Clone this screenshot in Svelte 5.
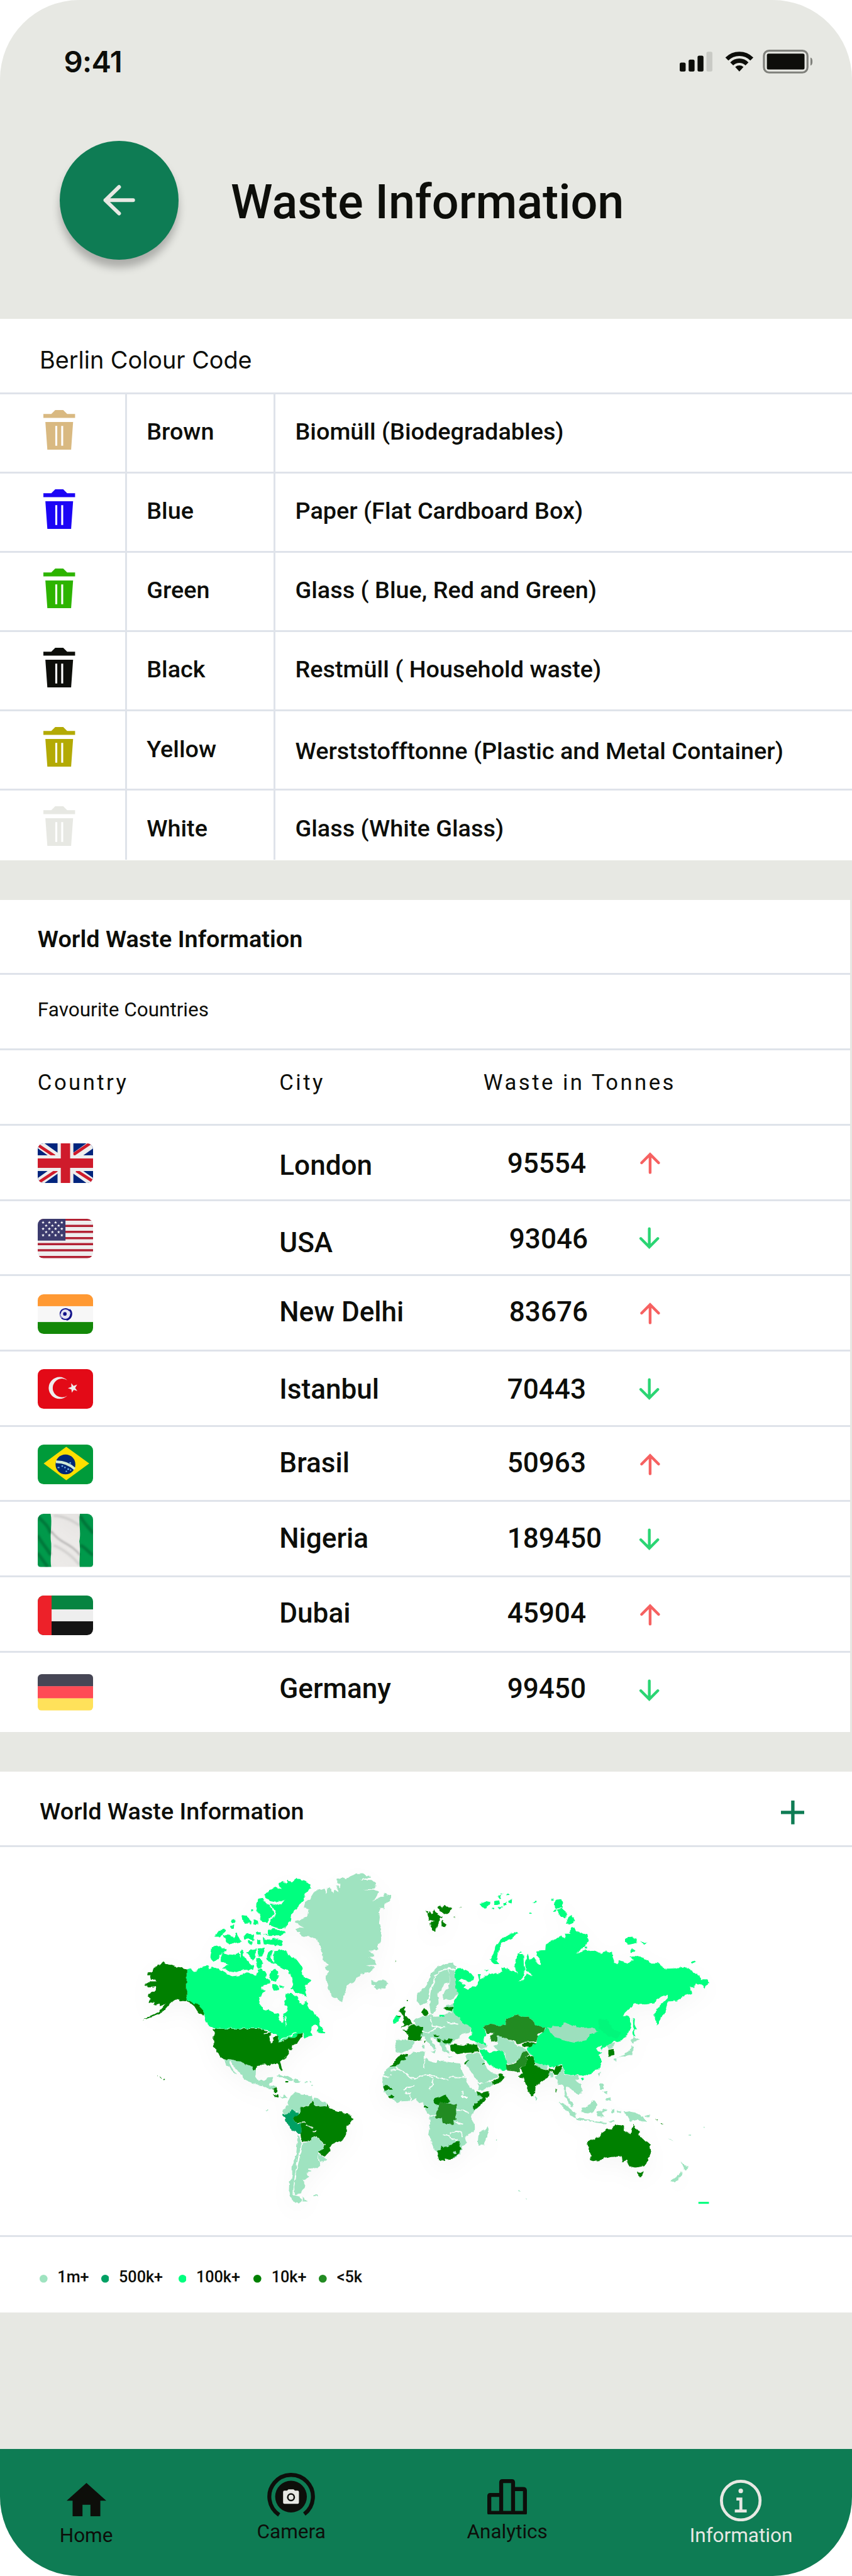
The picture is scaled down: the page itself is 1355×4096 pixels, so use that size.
<script>
  const bins = [
    { name: 'Brown', use: 'Biomüll (Biodegradables)', color: '#d9b981' },
    { name: 'Blue', use: 'Paper (Flat Cardboard Box)', color: '#1c05f5' },
    { name: 'Green', use: 'Glass ( Blue, Red and Green)', color: '#2db400' },
    { name: 'Black', use: 'Restmüll ( Household waste)', color: '#0d0e0a' },
    { name: 'Yellow', use: 'Werststofftonne (Plastic and Metal Container)', color: '#b3aa05', low: true },
    { name: 'White', use: 'Glass (White Glass)', color: '#e7e8e3' }
  ];

  const countries = [
    { flag: 'uk', city: 'London', tonnes: '95554', up: true, cityDrop: 'drop2', numDrop: 'drop1' },
    { flag: 'us', city: 'USA', tonnes: '93046', up: false, cityDrop: 'drop3', numDrop: 'drop1', inset: true },
    { flag: 'in', city: 'New Delhi', tonnes: '83676', up: true, cityDrop: '', numDrop: '', inset: true },
    { flag: 'tr', city: 'Istanbul', tonnes: '70443', up: false, cityDrop: 'drop1', numDrop: 'drop1' },
    { flag: 'br', city: 'Brasil', tonnes: '50963', up: true, cityDrop: '', numDrop: '' },
    { flag: 'ng', city: 'Nigeria', tonnes: '189450', up: false, cityDrop: '', numDrop: '' },
    { flag: 'ae', city: 'Dubai', tonnes: '45904', up: true, cityDrop: '', numDrop: '' },
    { flag: 'de', city: 'Germany', tonnes: '99450', up: false, cityDrop: '', numDrop: '' }
  ];

  const legend = [
    { label: '1m+', color: '#9fe3c0' },
    { label: '500k+', color: '#00a064' },
    { label: '100k+', color: '#00ff7f' },
    { label: '10k+', color: '#008000' },
    { label: '<5k', color: '#228b22' }
  ];

  // Canton stars of the US flag, in flag units
  const stars = [];
  for (let r = 0; r < 5; r++) {
    const odd = r % 2 === 1;
    for (let c = 0; c < (odd ? 3 : 4); c++) {
      stars.push([2.7 + c * 3.15 + (odd ? 1.55 : 0), 1.8 + r * 1.62]);
    }
  }

  // Land shapes of the western half of the map
  const west = {
    light: [
      'M995,168L1018,158 1050,150 1062,178 1062,150 1080,150 1092,172 1100,158 1125,172 1108,140 1118,138 1128,150 1128,135 1115,128 1115,110 1150,105 1165,112 1180,98 1200,88 1240,86 1275,97 1285,105 1230,114 1290,115 1313,130 1310,148 1250,160 1300,156 1325,165 1318,182 1300,208 1315,200 1330,188 1350,190 1350,172 1395,183 1380,205 1355,220 1355,235 1328,235 1332,280 1328,300 1340,330 1335,375 1320,400 1325,415 1275,418 1308,440 1270,450 1310,455 1315,478 1260,480 1308,488 1275,512 1232,518 1200,550 1162,568 1155,600 1140,635 1115,625 1095,620 1070,580 1057,545 1060,520 1075,505 1045,490 1072,478 1045,460 1040,435 1030,400 1010,368 975,355 940,358 915,340 905,322 925,318 950,320 902,300 905,290 930,285 962,270 968,240 945,235 950,210 975,195Z',
      'M1287,545L1310,553 1330,545 1360,543 1376,560 1360,575 1330,583 1300,575 1310,565 1290,560Z',
      'M540,883L570,885 600,890 635,893 650,907 670,905 685,925 700,930 698,955 715,975 740,975 760,960 788,958 782,975 765,985 768,995 805,997 785,1010 755,1005 735,995 710,992 670,980 635,965 630,950 590,915 570,890 560,890 575,915 600,947 590,942 550,905Z',
      'M815,1040L835,1045 850,1033 858,1045 835,1050Z',
      'M805,952L840,950 870,960 897,972 870,972 840,960 810,958Z',
      'M895,966L930,975 930,982 892,980ZM946,976h14v5h-14ZM975,976h6v6h-6ZM982,992h8v6h-8Z',
      'M865,1060L880,1035 905,1020 925,1030 960,1032 985,1035 988,1060 970,1075 960,1085 935,1085 928,1108 900,1105 880,1095 870,1120 845,1118 838,1100 855,1085 865,1080Z',
      'M990,1060L1000,1045 1030,1060 1060,1066 1058,1083 1010,1083 995,1075Z',
      'M912,1205L922,1210 930,1240 918,1290 910,1330 900,1370 892,1420 890,1462 926,1470 935,1490 920,1500 885,1485 868,1445 870,1410 885,1380 885,1340 905,1290 910,1240Z',
      'M936,1240L975,1235 985,1218 1015,1215 1050,1245 1045,1265 1018,1280 1018,1310 1028,1335 1010,1347 965,1350 980,1363 958,1368 968,1385 940,1400 950,1420 930,1455 898,1460 895,1430 905,1370 918,1320 928,1280Z',
      'M940,1468L950,1482 965,1490 938,1490Z',
      'M1018,1290L1035,1292 1060,1308 1050,1320 1025,1320Z',
      'M992,1460h25v5h-25ZM1180,1484l10,7ZM750,1096h12v5h-12Z',
      'M1410,800L1450,798 1508,806 1500,825 1480,845 1455,852 1430,855 1412,850 1415,825Z'
    ],
    bright: [
      'M346,494L365,497 385,509 410,492 452,480 460,497 480,488 505,494 530,505 555,520 580,527 620,523 650,510 680,518 700,525 710,500 722,495 745,505 755,518 750,535 775,545 770,560 740,565 725,583 750,585 735,600 720,615 714,640 728,655 735,668 765,672 795,683 815,690 817,710 835,727 845,715 838,690 858,675 858,660 845,650 850,625 850,605 880,603 915,615 920,640 940,652 955,630 970,660 990,680 1010,697 1027,715 1022,735 1040,750 1051,768 1030,768 1010,762 1018,745 1010,735 985,742 975,765 992,778 970,788 948,797 945,785 938,768 925,770 905,786 880,788 850,796 815,808 818,795 805,775 780,770 760,757 740,755 715,750 495,751 470,745 445,725 435,700 433,680 410,655 385,645 362,632 346,632Z',
      'M475,400L500,395 548,412 540,422 515,435 505,455 485,467 466,450 472,425Z',
      'M520,445L530,425 555,432 580,435 600,432 612,425 622,450 622,415 635,420 632,438 650,455 670,475 690,485 685,500 640,500 600,512 560,505 525,490 560,478 525,465Z',
      'M490,358L500,340 540,320 548,328 535,345 515,358ZM530,352L560,350 590,365 600,340 615,365 628,380 590,385 565,395 550,380Z',
      'M568,292L595,283 598,298 575,300ZM568,312L592,306 590,320 570,322ZM628,265L650,268 678,290 675,308 660,298 645,305 635,290ZM688,283L710,292 712,308 690,303Z',
      'M637,350L665,345 690,350 688,375 665,368 640,370ZM672,238h10v10h-10ZM660,378h25v10h-25Z',
      'M650,425L675,412 700,408 698,445 685,460 665,440ZM708,408L750,405 735,435 712,445ZM705,455L720,450 735,470 730,490 712,495 703,480ZM700,337L725,340 722,352 702,348ZM703,372h20v18h-20Z',
      'M730,345L765,350 762,330 790,322 848,340 840,352 760,352ZM735,362L760,370 800,365 835,375 832,395 780,395 740,390Z',
      'M740,180L770,160 800,145 830,155 818,130 835,120 860,132 862,115 880,125 900,112 940,115 975,130 984,150 945,180 950,190 920,225 905,240 880,260 875,290 850,320 820,322 790,315 770,308 775,285 798,270 800,250 770,215 800,220 830,222 850,200 810,212 770,205 750,190Z',
      'M702,215L712,195 735,192 750,215 770,222 785,245 792,265 765,280 760,298 735,298 718,280 722,262 700,245Z',
      'M765,420L785,415 775,450 790,470 790,420 850,415 865,435 900,450 935,490 935,520 960,535 982,543 965,560 945,565 955,585 957,615 940,608 900,595 880,578 890,560 880,530 860,500 830,490 800,475 770,470 752,450Z',
      'M780,565L800,560 822,585 810,588 790,585ZM820,568h20v8h-20ZM775,505L800,495 815,525 800,550 780,545 765,530Z',
      'M930,640L940,652 925,645Z',
      'M1400,715L1415,692 1435,700 1432,718 1405,728Z'
    ],
    dark: [
      'M346,496L318,489 290,486 268,478 250,477 222,467 216,474 195,480 178,492 168,512 146,513 144,522 160,524 165,535 190,549 160,549 132,562 145,568 152,577 187,572 185,585 170,597 150,600 148,615 160,625 155,638 180,637 180,650 208,644 210,655 240,645 225,660 205,678 180,690 150,700 123,713 150,707 190,692 215,685 232,672 255,650 260,640 290,627 320,632 346,634 362,632 385,645 395,640 410,655 425,668 435,682 433,694 415,690 400,675 385,655 370,645 346,636Z',
      'M482,755L495,752 715,752 745,760 780,768 772,790 776,812 784,812 790,785 800,782 815,785 818,808 850,798 875,788 905,787 920,770 935,768 938,785 920,798 910,815 885,822 880,840 868,840 868,855 850,875 828,888 822,893 835,925 830,933 815,915 808,900 785,902 765,908 750,903 720,906 705,915 700,930 685,925 670,905 650,907 635,893 600,890 570,885 540,883 510,865 498,845 484,825 482,790 487,770Z',
      'M788,808L792,785 812,782 816,800 805,812Z',
      'M782,1012L808,1000 805,1025 795,1022ZM790,1028L810,1035 815,1048 800,1042ZM850,975h18v6h-18Z',
      'M925,1085L945,1090 965,1082 990,1060 997,1078 1010,1085 1060,1083 1065,1068 1072,1090 1110,1102 1155,1112 1185,1122 1194,1138 1182,1152 1162,1170 1160,1200 1145,1228 1110,1238 1085,1248 1080,1272 1052,1298 1030,1288 1015,1275 1045,1268 1052,1245 1030,1225 1010,1212 985,1218 975,1232 935,1235 928,1210 928,1158 900,1150 890,1140 895,1128 918,1118 928,1105Z',
      'M1440,660L1465,655 1455,672 1468,675 1462,690 1475,705 1490,715 1496,725 1485,737 1438,745 1455,735 1448,725 1458,715 1450,700 1440,690 1432,675ZM1420,694h15v7h-15ZM1470,628h5v8h-5Z',
      'M1450,755L1475,757 1476,744 1500,732 1520,735 1555,748 1550,775 1545,798 1510,804 1475,798 1478,775Z',
      'M1378,914L1402,905 1410,885 1440,858 1470,863 1475,882 1440,895 1412,914Z',
      'M226,966L236,970 230,975ZM196,954h5v3h-5ZM212,959h6v3h-6ZM1406,463l9,-3v4Z'
    ],
    peru: 'M832,1118L845,1120 870,1112 882,1096 900,1107 920,1108 915,1122 895,1130 890,1140 900,1150 928,1158 928,1198 920,1202 885,1185 870,1170 850,1140Z',
    cuts: 'M740,770L775,765M820,802L850,790 880,780 910,765M855,740L850,700M912,1157L950,1152M955,1165L990,1175M990,1192h15M930,1235L925,1290 910,1330 900,1400'
  };

  // Land shapes of the eastern half of the map
  const east = {
    light: [
      'M5,600L40,580 65,545 75,515 105,490 150,472 185,468 210,485 200,500 165,490 130,500 95,525 90,550 68,585 66,620 55,640 20,652 3,635Z',
      'M73,600L78,580 96,555 98,530 125,508 150,500 160,492 168,520 170,555 145,560 135,580 112,600 115,640 100,665 100,680 82,690 75,685 68,650Z',
      'M165,495L198,505 205,560 215,600 190,625 140,628 135,605 165,575 172,555Z',
      'M155,650L195,645 190,680 145,672Z',
      'M-12,715L30,698 75,693 95,700 145,698 155,685 190,680 225,705 240,725 285,745 275,765 230,775 225,790 200,798 185,812 175,820 160,818 150,828 175,858 155,855 130,840 118,812 90,790 68,792 100,825 98,840 80,830 50,800 45,785 25,785 30,765 35,745 0,738Z',
      'M78,848L100,842 98,856ZM33,822h10v14h-10ZM165,868h20v4h-20Z',
      'M-139,914L-105,912 -42,868 -15,852 45,850 42,870 60,888 100,898 110,885 150,892 200,898 225,900 235,930 255,965 270,1000 305,1020 330,1040 345,1070 300,1100 285,1120 288,1150 300,1160 300,1190 265,1203 250,1215 257,1240 235,1250 230,1280 200,1305 150,1310 120,1312 112,1290 95,1270 80,1240 62,1205 72,1160 68,1125 45,1095 35,1068 10,1065 0,1048 -27,1060 -77,1062 -97,1067 -117,1055 -139,1040 -167,1018 -170,985 -172,960 -157,935Z',
      'M255,868L265,858 322,855 345,885 350,905 365,925 385,938 418,945 415,962 380,972 345,985 318,978 300,960 280,935 255,905Z',
      'M315,988L385,978 393,992 345,1012 320,1014Z',
      'M318,1210L325,1188 350,1182 365,1168 373,1185 360,1220 345,1248 320,1252 315,1235Z',
      'M415,785L440,783 465,800 500,803 505,820 560,835 565,848 540,858 525,885 490,900 460,900 455,855 415,843 395,825 415,820Z',
      'M300,808L345,820 365,822 360,834 330,835Z',
      'M605,893L640,905 675,913 672,925 640,920 610,908ZM680,935L700,940 700,960 683,958ZM607,1038L617,1048 613,1060 607,1055Z',
      'M708,958L725,945 735,920 752,918 760,945 790,952 825,950 832,965 812,970 845,990 848,1015 830,1038 810,1025 790,1008 765,1000 760,1015 775,1045 800,1070 802,1088 785,1078 770,1050 755,1030 755,1005 745,990 725,995 725,980Z',
      'M730,1062L755,1072 785,1092 815,1115 815,1132 790,1122 755,1090ZM812,1132L860,1138 905,1145 975,1155 970,1160 900,1150 825,1140Z',
      'M842,1090L875,1085 895,1062 908,1055 925,1072 915,1095 900,1117 860,1112 845,1105Z',
      'M925,1105L975,1096 975,1102 945,1108 960,1125 945,1128 925,1125ZM937,985L955,985 955,1010 940,1010ZM950,1018L975,1015 980,1035ZM962,1050L990,1045 990,1062 970,1058ZM985,1145h30v5h-30ZM1000,1095h12v18h-12Z',
      'M1025,1100L1047,1103 1045,1112 1028,1110ZM1058,1108L1085,1105 1130,1112 1160,1130 1175,1152 1150,1150 1130,1142 1095,1147 1080,1125ZM1165,1125L1195,1118 1190,1128Z',
      'M928,940L940,932 935,957ZM970,828L1005,810 1015,815 1005,830 985,842Z',
      'M1095,805L1110,785 1140,797 1115,805 1112,815ZM1100,820L1112,830 1100,862 1070,868 1050,870 1025,875 1060,860 1090,845ZM1012,880L1028,878 1022,892 1014,890Z',
      'M1350,1318L1370,1335 1393,1340 1378,1362 1362,1352 1365,1345ZM1355,1362L1360,1375 1340,1395 1325,1408 1302,1407 1310,1395 1335,1380Z',
      'M405,1222h8v5h-8ZM522,1442h12v5h-12ZM558,1477h8v4h-8ZM1395,1202h9v4h-9ZM1290,1220L1315,1232 1300,1228ZM1468,1171h8v4h-8Z'
    ],
    bright: [
      'M200,500L222,492 260,505 290,520 295,545 270,552 235,540 215,545 250,562 245,575 265,585 285,570 305,572 315,550 322,545 315,518 330,518 330,540 345,535 350,525 385,515 415,515 440,510 435,490 465,495 500,505 517,518 502,480 515,455 520,432 548,432 550,480 556,500 545,530 525,548 550,545 565,515 595,528 580,508 562,500 555,470 570,430 580,455 600,445 620,470 635,480 630,455 612,435 615,418 660,415 662,388 700,372 740,355 765,362 760,345 790,345 777,335 800,318 815,330 850,343 875,350 880,375 860,400 815,432 870,415 915,418 940,430 970,420 1000,425 1005,450 1020,472 1035,458 1080,470 1110,460 1090,445 1130,440 1170,450 1195,470 1240,470 1265,495 1325,493 1385,490 1430,515 1460,540 1480,540 1497,555 1475,578 1455,565 1425,560 1420,575 1395,572 1410,600 1370,610 1330,632 1285,635 1275,650 1278,680 1255,700 1230,735 1220,710 1218,685 1245,655 1285,620 1285,603 1250,615 1215,640 1165,645 1115,645 1085,670 1055,695 1075,695 1095,705 1098,740 1080,775 1050,800 1025,808 1005,805 985,820 945,840 948,825 915,833 925,845 950,850 935,865 947,895 935,920 900,940 850,955 820,948 790,950 765,945 750,915 745,905 705,915 675,912 640,905 605,895 600,870 570,850 565,835 590,825 615,810 620,785 660,755 662,748 610,735 580,702 560,703 520,690 455,712 460,735 425,738 380,730 345,745 355,775 345,795 345,812 360,822 330,815 300,805 270,795 285,770 280,745 240,725 225,705 195,690 187,660 195,635 215,605 205,585 200,545Z',
      'M378,455L395,430 405,400 430,370 460,355 510,335 519,345 500,358 465,375 435,385 425,410 415,440 410,460 425,475 400,475Z',
      'M705,210L735,195 750,212 748,235 710,238ZM720,243L745,237 770,255 765,282 735,272ZM765,303L780,270 795,265 812,290 790,300ZM700,242h16v8h-16ZM690,196h12v5h-12ZM600,207h12v4h-12ZM578,255h10v5h-10Z',
      'M327,218L355,208 378,212 372,225 350,238 340,230ZM400,205L425,202 428,215 405,222ZM412,190L432,182 435,195ZM442,215L465,208 462,225 445,227ZM470,205L490,198 488,212 475,213ZM415,230L442,232 430,238ZM430,172h12v4h-12ZM465,176h12v4h-12ZM388,234h10v6h-10Z',
      'M1070,362L1095,358 1130,368 1128,385 1085,392 1070,380ZM1145,375L1178,385 1160,390ZM1098,406L1120,420 1098,425ZM1405,468L1420,460 1433,466 1415,473ZM862,400h14v8h-14ZM352,502L368,500 360,510ZM528,422h10v7h-10Z',
      'M1108,705L1117,710 1115,730 1128,755 1115,750 1118,780 1108,780ZM840,965L858,963 850,973Z',
      'M322,838L345,838 375,853 415,843 450,850 455,875 470,925 440,930 395,915 350,888 335,865Z',
      'M122,692h26v8h-26Z'
    ],
    dark: [
      'M48,245L65,255 70,248 80,262 95,238 105,255 115,265 132,272 112,300 95,338 75,315 72,300 95,290 62,285 60,265ZM110,230L120,225 130,235 145,225 180,235 175,255 145,265 125,250ZM130,285L160,305 145,320 130,310ZM218,234l14,-4v2ZM185,275l12,-4v3Z',
      'M30,680L45,662 50,675 62,685 50,695 35,692ZM143,660L187,655 187,675 145,670Z',
      'M90,776L118,780 118,785 95,784ZM130,802L160,797 188,793 182,810 150,815ZM98,790L128,800 128,812 115,808ZM42,803h7v8h-7Z',
      'M176,820L200,818 240,822 265,817 315,820 322,850 290,853 255,855 210,860 180,845Z',
      'M308,1018L330,1025 372,1018 370,1040 340,1072 295,1100 293,1075 310,1068 340,1045 315,1035Z',
      'M88,1052L120,1045 150,1032 175,1065 150,1070 125,1068 115,1078 92,1072Z',
      'M103,1270L130,1272 132,1248 140,1260 180,1248 205,1232 222,1233 226,1255 232,1262 215,1290 185,1308 150,1310 118,1315Z',
      'M-167,995L-150,992 -128,1005 -122,1015 -165,1016ZM-140,1040L-125,1033 -113,1042 -125,1050ZM40,1083h21v8h-21Z',
      'M388,978L425,960 420,945 435,942 455,958 430,982 392,992ZM245,895L268,887 262,895 248,903ZM338,898h12v5h-12Z',
      'M540,818L570,808 615,812 590,825 575,832 545,825Z',
      'M535,920L555,905 570,885 560,872 580,865 600,870 605,905 630,917 680,930 680,950 650,975 610,998 608,1025 590,1042 575,1025 555,980 550,960 530,965 520,955 545,945ZM678,920L705,927 715,912 748,910 735,930 725,948 708,948 700,935 680,932Z',
      'M985,845L1005,840 1010,862 985,872ZM712,1012h4v14h-4Z',
      'M873,1235L900,1222 940,1212 950,1195 975,1180 1000,1182 1012,1165 1035,1162 1062,1168 1060,1185 1095,1200 1105,1170 1110,1158 1122,1182 1138,1190 1142,1210 1170,1232 1195,1250 1200,1280 1185,1310 1170,1338 1140,1343 1115,1345 1090,1338 1075,1318 1080,1308 1055,1318 1050,1300 1030,1295 1000,1297 960,1303 940,1315 905,1320 887,1312 893,1295 880,1262Z',
      'M1128,1363L1158,1365 1155,1380 1143,1386 1132,1378ZM1220,1136L1235,1142 1232,1146ZM1240,1148L1265,1160 1258,1160Z'
    ],
    forest: [
      'M345,745L380,730 425,738 460,735 455,712 520,690 560,703 580,702 610,735 662,748 650,765 625,770 615,805 560,808 520,818 500,800 465,798 440,785 415,783 415,808 385,805 378,785 395,770 375,768 360,775Z',
      'M458,905L500,900 525,885 540,855 560,848 580,858 560,870 570,888 550,910 530,920 530,938 510,935 465,930Z',
      'M118,1068L160,1070 210,1076 200,1095 203,1130 207,1137 190,1142 193,1162 165,1158 135,1155 132,1135 97,1132 105,1105 115,1095Z'
    ],
    mongolia: 'M672,750L700,740 740,742 755,727 800,738 850,748 900,745 930,765 890,775 870,800 810,812 760,803 710,790 690,770Z',
    manchuria: 'M935,715L965,710 985,722 1000,750 1045,768 1030,790 1000,790 960,770 930,745Z',
    cuts: 'M-102,918L-10,968 5,962 52,946M65,947L165,972M170,958h100M52,946L82,962 85,990 65,1010M-172,957h32M-130,928h28M-132,948h8M-65,1015L-40,1000 -10,995M-27,1060L-30,1030 -55,1025M45,870L42,920M235,1020L240,1045 230,1040M205,1100L240,1100 270,1110M70,1125L100,1122M195,1150L240,1160M140,1205L165,1205 185,1225 215,1228M170,1200L205,1190 232,1192 235,1215M240,1045L260,1045M75,700L85,740 110,745 150,742M160,725L215,732M30,765L60,770 80,760 110,745M90,560L66,590 68,640'
  };
</script>

<div class="screen">
  <header class="top">
    <div class="status">
      <span class="time">9:41</span>
      <svg class="status-icons" viewBox="0 0 68 12" aria-hidden="true">
        <g fill="#0d0e0a">
          <rect x="0" y="6.5" width="3" height="4.5" rx=".8" />
          <rect x="4.5" y="5" width="3" height="6" rx=".8" />
          <rect x="9" y="3" width="3" height="8" rx=".8" />
          <rect x="13.5" y="1" width="3" height="10" rx=".8" fill="#c9cac5" />
          <path d="M30.1 11L28 8.7A3.2 3.2 0 0 1 32.2 8.7Z" />
          <rect x="44" y="2" width="19" height="8" rx=".8" />
        </g>
        <g fill="none" stroke="#0d0e0a" stroke-width="2.15">
          <path d="M26.25 7.15A5.45 5.45 0 0 1 33.95 7.15" />
          <path d="M23.8 4.7A8.92 8.92 0 0 1 36.4 4.7" />
        </g>
        <rect x="42.5" y=".5" width="22" height="11" rx="2.6" fill="none" stroke="#7f807b" />
        <path d="M66 4C66.8 4.2 67 5 67 6S66.800 7.800 66 8Z" fill="#7f807b" />
      </svg>
    </div>
    <div class="heading">
      <button class="back" aria-label="Back">
        <svg viewBox="0 0 18 18" fill="none" stroke="#e7e8e3" stroke-width="1.9" stroke-linecap="round" stroke-linejoin="round">
          <path d="M16.100 9H2.100M9 2.300L2.100 9 9 15.700" />
        </svg>
      </button>
      <h1>Waste Information</h1>
    </div>
  </header>

  <section class="codes">
    <h2>Berlin Colour Code</h2>
    {#each bins as bin}
      <div class="code-row">
        <div class="bin">
          <svg viewBox="0 0 16 20" fill={bin.color}>
            <path d="M0 2H4L6 0H10L12 2H16V4H0ZM1 6H15L14 20H2ZM6 8V18H7V8ZM9 8V18H10V8Z" fill-rule="evenodd" />
          </svg>
        </div>
        <div class="cell name">{bin.name}</div>
        <div class="cell use" class:low={bin.low}>{bin.use}</div>
      </div>
    {/each}
  </section>

  <section class="world">
    <h2>World Waste Information</h2>
    <h3>Favourite Countries</h3>
    <div class="columns">
      <span>Country</span><span>City</span><span class="waste">Waste in Tonnes</span>
    </div>
    {#each countries as c}
      <div class="country">
        <div class="flag {c.flag}">
          {#if c.flag === 'uk'}
            <svg viewBox="0 0 28 20">
              <rect width="28" height="20" fill="#00247d" />
              <path d="M-1-.7L29 20.700M29-.7L-1 20.700" stroke="#eee" stroke-width="4" />
              <path d="M0 .8L8.500 6.400M18 5.700L27 -.4M0 20L10 13.400M19.500 13.800L28 19.300" stroke="#cf1b2b" stroke-width="1.500" />
              <path d="M14 0V20M0 10H28" stroke="#eee" stroke-width="8" />
              <path d="M14 0V20M0 10H28" stroke="#cf1b2b" stroke-width="4.700" />
            </svg>
          {:else if c.flag === 'us'}
            <svg viewBox="0 0 28 20">
              <rect width="28" height="20" fill="#eee" />
              <path d="M0 .4H28M0 3.550H28M0 6.600H28M0 9.750H28M0 12.800H28M0 15.900H28M0 19.300H28" stroke="#b22234" stroke-width="1.100" />
              <rect width="14" height="11" fill="#3c3b6e" />
              {#each stars as [x, y]}
                <path transform="translate({x} {y})" d="M0-.8L.2-.25.8-.25.32.1.5.7 0 .33-.5.7-.32.1-.8-.25-.2-.25Z" fill="#fff" />
              {/each}
            </svg>
          {:else if c.flag === 'in'}
            <svg viewBox="0 0 28 20">
              <rect width="28" height="7" fill="#ff9933" />
              <rect y="6" width="28" height="8" fill="#f7f7f7" />
              <rect y="14" width="28" height="6" fill="#138808" />
              <circle cx="14" cy="10" r="2.700" fill="#e4e4f2" stroke="#1a1a91" stroke-width=".7" stroke-dasharray="6.500 .3 .3 .3 .3 .3 .3 .3" />
              <path d="M14.500 12.900A3 3 0 0 0 16 7.700" fill="none" stroke="#12128a" stroke-width=".8" />
              <circle cx="13.700" cy="9.900" r=".9" fill="#12128a" />
            </svg>
          {:else if c.flag === 'tr'}
            <svg viewBox="0 0 28 20">
              <rect width="28" height="20" fill="#e30a17" />
              <path d="M14.900 5.600A5.500 5.500 0 1 0 14.900 13.400A4.700 4.700 0 1 1 14.900 5.600Z" fill="#eee" />
              <path d="M15.200 9.600L17 9 16.900 7.100 18.100 8.500 19.900 7.800 18.900 9.500 20 11 18.200 10.500 17.200 11.900 17 10.200Z" fill="#eee" />
            </svg>
          {:else if c.flag === 'br'}
            <svg viewBox="0 0 28 20">
              <rect width="28" height="20" fill="#009b3a" />
              <path d="M3 9.500L14.400 1.100 26 9.500 14.400 18Z" fill="#fedf00" />
              <circle cx="14" cy="10" r="5" fill="#002776" />
              <path d="M9.200 8.700C13 8.600 16 9.800 18.700 12.300" fill="none" stroke="#cfead8" stroke-width="1.300" />
              <path d="M10 11.300h1v.6h-1zM12 10.500h.8v.7h-.8zM13.400 11.200h.7v.7h-.7zM15 12h.8v.8h-.8zM14.100 13.200h.7v.6h-.7zM16.300 12.500h.6v.7h-.6zM16 9h.8v.6h-.8z" fill="#76b9f0" />
            </svg>
          {:else if c.flag === 'ng'}
            <svg viewBox="0 0 28 27" preserveAspectRatio="none">
              <defs>
                <linearGradient id="fold" x1="0" y1="1" x2=".7" y2="0" spreadMethod="repeat">
                  <stop offset="0" stop-color="#000" stop-opacity=".12" />
                  <stop offset=".2" stop-color="#000" stop-opacity="0" />
                  <stop offset=".45" stop-color="#000" stop-opacity=".04" />
                  <stop offset=".6" stop-color="#000" stop-opacity="0" />
                  <stop offset="1" stop-color="#000" stop-opacity=".12" />
                </linearGradient>
                <filter id="soft"><feGaussianBlur stdDeviation=".5" /></filter>
              </defs>
              <rect width="28" height="27" fill="#eceae8" />
              <path d="M0 0H6.500C7.500 5 6 10 6.800 15 7 20 6.200 23 6.800 27H0Z" fill="#009a4b" />
              <path d="M21.300 0C20.500 5 22 9 21 14 21.800 19 20.800 23 21.200 27H28V0Z" fill="#009a4b" />
              <g fill="none" stroke="#000" filter="url(#soft)">
                <path d="M7 9C11 15 17 15 21.300 21" stroke-opacity=".25" stroke-width=".8" />
                <path d="M8 1C13 1 17 3 21 6M8 16C13 18 18 22 21 26" stroke-opacity=".1" stroke-width="1.200" />
                <path d="M0 1C2 4 5 5 6.500 10M0 11C2 15 5 18 6.500 21M0 20L5 27M21.500 1C23 5 26 7 28 10M21.500 16C24 17 26 20 28 21" stroke-opacity=".22" stroke-width="1.600" />
              </g>
              <rect width="28" height="27" fill="url(#fold)" opacity=".25" />
            </svg>
          {:else if c.flag === 'ae'}
            <svg viewBox="0 0 28 20">
              <rect width="28" height="7.100" fill="#068441" />
              <rect y="7" width="28" height="6.100" fill="#eee" />
              <rect y="13" width="28" height="7" fill="#141414" />
              <rect width="7" height="20" fill="#ed2129" />
            </svg>
          {:else}
            <svg viewBox="0 0 28 18.300" preserveAspectRatio="none">
              <rect width="28" height="6.200" fill="#464655" />
              <rect y="6.100" width="28" height="6.200" fill="#ff4b55" />
              <rect y="12.200" width="28" height="6.100" fill="#ffe15a" />
            </svg>
          {/if}
        </div>
        <div class="city {c.cityDrop}">{c.city}</div>
        <div class="tonnes {c.numDrop}" class:inset={c.inset}>{c.tonnes}</div>
        <svg class="trend" viewBox="0 0 12 12" fill="none" stroke-width="1.400" stroke-linecap="round">
          {#if c.up}
            <path d="M6 1.400V10.600M1.700 5.700L6 1.400 10.300 5.700" stroke="#f66161" />
          {:else}
            <path d="M5.600 1.200V10.400M1.300 6.100L5.600 10.400 9.900 6.100" stroke="#2bd573" />
          {/if}
        </svg>
      </div>
    {/each}
  </section>

  <section class="map-card">
    <div class="map-title">
      <h2>World Waste Information</h2>
      <svg viewBox="0 0 12 12" stroke="#0e7c54" stroke-width="1.700"><path d="M6 0V12M0 6H12" /></svg>
    </div>
    <svg class="map" viewBox="0 0 430 196" aria-label="World map of waste">
      <defs>
        <filter id="coast" x="0" y="0" width="100%" height="100%" color-interpolation-filters="sRGB">
          <feTurbulence type="fractalNoise" baseFrequency=".45" numOctaves="2" seed="4" />
          <feDisplacementMap in="SourceGraphic" scale="1.7" xChannelSelector="R" yChannelSelector="G" />
        </filter>
      </defs>
      <g class="land">
        <g filter="url(#coast)">
          <g transform="translate(60 3) scale(.098853 .117985)">
            {#each west.light as d}<path {d} fill="#9fe3c0" />{/each}
            {#each west.bright as d}<path {d} fill="#00ff7f" />{/each}
            {#each west.dark as d}<path {d} fill="#008000" />{/each}
            <path d={west.peru} fill="#00a064" />
            <path d={west.cuts} fill="none" stroke="#fff" stroke-width="4" />
          </g>
          <g transform="translate(210 3) scale(.098853 .117985)">
            {#each east.light as d}<path {d} fill="#9fe3c0" />{/each}
            <path d={east.cuts} fill="none" stroke="#fdfdfd" stroke-width="5" />
            {#each east.bright as d}<path {d} fill="#00ff7f" />{/each}
            <path d={east.manchuria} fill="#02f67b" />
            {#each east.dark as d}<path {d} fill="#008000" />{/each}
            {#each east.forest as d}<path {d} fill="#228b22" />{/each}
            <path d={east.mongolia} fill="#9cdfbd" />
            <ellipse cx="196" cy="1279" rx="8" ry="6" fill="#9fe3c0" />
          </g>
        </g>
      </g>
      <rect x="352.500" y="179" width="5.300" height="1" fill="#00ff7f" />
    </svg>
    <ul class="legend">
      {#each legend as item}
        <li><svg viewBox="0 0 4 4"><circle cx="2" cy="2" r="2" fill={item.color} /></svg>{item.label}</li>
      {/each}
    </ul>
  </section>

  <nav>
    <a class="home" href="#home">
      <svg viewBox="0 0 20 17"><path d="M10 0L20 9H17V17H12V11H8V17H3V9H0Z" fill="#0d0e0a" /></svg>
      Home
    </a>
    <a class="camera" href="#camera">
      <svg viewBox="0 0 24 22.200">
        <path d="M6 21.200A11 11 0 1 1 18.700 20.800" fill="none" stroke="#0d0e0a" stroke-width="2" />
        <circle cx="12" cy="12" r="8" fill="#0d0e0a" />
        <path d="M9 9H10L10.700 8.300H13.300L14 9H15.300A.7.7 0 0 1 16 9.700V14.900A.7.7 0 0 1 15.300 15.600H8.700A.7.7 0 0 1 8 14.900V9.700A.7.7 0 0 1 8.700 9Z" fill="#e7e8e3" />
        <circle cx="12" cy="12.300" r="1.650" fill="none" stroke="#0d0e0a" stroke-width=".8" />
      </svg>
      Camera
    </a>
    <a class="analytics" href="#analytics">
      <svg viewBox="0 0 20 18" fill="none" stroke="#0d0e0a" stroke-width="2" stroke-linejoin="round">
        <path d="M1 17V8.500Q1 8 1.500 8H7V1.700Q7 1 7.700 1H12.300Q13 1 13 1.700V5H18Q19 5 19 5.800V17ZM7 8V17M13 5V17" />
      </svg>
      Analytics
    </a>
    <a class="info" href="#information">
      <svg viewBox="0 0 21 21" fill="#e7e8e3">
        <circle cx="10.500" cy="10.500" r="9.750" fill="none" stroke="#e7e8e3" stroke-width="1.500" />
        <circle cx="10.500" cy="5.600" r="1.150" />
        <path d="M8.300 9H11.300V15H13.500V16.500H7.500V15H9.800V10.500H8.300Z" />
      </svg>
      Information
    </a>
  </nav>
</div>

<style>
  /* 1rem is one unit of the 430-wide layout */
  :global(html) { font-size: 3.1511px; background: #fff; }
  :global(body) { margin: 0; overflow: hidden; font-size: 12rem; }
  .screen {
    width: 100%;
    height: 4096px;
    overflow: hidden;
    display: flex;
    flex-direction: column;
    box-sizing: border-box;
    border-radius: 40rem;
    background: #e7e8e3;
    color: #0d0e0a;
    font-family: Roboto, 'Liberation Sans', sans-serif;
    font-weight: 500;
    line-height: 16rem;
  }
  .screen * { box-sizing: border-box; }
  svg { display: block; flex: none; }
  h1, h2, h3, ul { margin: 0; padding: 0; }

  .top { height: 161rem; flex: none; }
  .status { height: 71rem; display: flex; align-items: flex-start; justify-content: space-between; padding: 25rem 19rem 0 32.2rem; }
  .time { font-family: Inter, sans-serif; font-weight: 600; font-size: 15rem; line-height: 12rem; letter-spacing: -.2rem; }
  .status-icons { width: 68rem; height: 12rem; }
  .heading { display: flex; align-items: center; height: 60rem; padding-left: 30rem; gap: 26.500rem; }
  .back {
    width: 60rem; height: 60rem; border: 0; border-radius: 50%; padding: 0;
    display: grid; place-items: center;
    background: #0e7c54; box-shadow: 0 4rem 4rem rgba(0, 0, 0, .25);
  }
  .back svg { width: 18rem; height: 18rem; }
  h1 { font-size: 24rem; font-weight: 500; line-height: 28rem; padding-top: 1.800rem; }

  section { flex: none; background: #fff; }
  h2 { font-size: 12rem; font-weight: 500; }

  .codes { height: 273rem; }
  .codes h2 { height: 38rem; padding: 12.700rem 20rem 0; font-family: Inter, sans-serif; font-weight: 400; border-bottom: 1rem solid #dfe3ea; }
  .code-row { display: grid; grid-template-columns: 64rem 75rem 1fr; height: 40rem; border-bottom: 1rem solid #dfe3ea; }
  .code-row:last-child { height: 35rem; border-bottom: 0; }
  .bin { padding: 8rem 0 0 22rem; border-right: 1rem solid #dfe3ea; }
  .bin svg { width: 16rem; height: 20rem; }
  .cell { padding: 10.900rem 0 0 10rem; white-space: nowrap; }
  .name { border-right: 1rem solid #dfe3ea; }
  .low { padding-top: 11.900rem; }

  .world { width: 429rem; height: 420rem; margin-top: 20rem; }
  .world h2 { height: 38rem; padding: 11.900rem 19rem 0; font-weight: 600; border-bottom: 1rem solid #dfe3ea; }
  .world h3 { height: 38rem; padding: 9.600rem 19rem 0; font-size: 10rem; font-weight: 400; border-bottom: 1rem solid #dfe3ea; }
  .columns, .country { display: grid; grid-template-columns: 122rem 115rem 66rem 1fr; height: 38rem; padding-left: 19rem; border-bottom: 1rem solid #dfe3ea; }
  .columns { padding-top: 8.300rem; font-size: 11rem; font-weight: 400; letter-spacing: 1.100rem; white-space: nowrap; }
  .waste { margin-left: -12rem; }
  .country:last-child { border-bottom: 0; height: 40rem; }
  .flag { margin-top: 9rem; width: 28rem; height: 20rem; border-radius: 3rem; overflow: hidden; }
  .flag svg { width: 100%; height: 100%; }
  .flag.ng { margin-top: 6rem; height: 26.800rem; border-radius: 3rem 3rem 1.500rem 1.500rem; }
  .flag.tr, .flag.br, .flag.ae { margin-top: 9rem; }
  .flag.de { margin-top: 10.800rem; height: 18.300rem; border-radius: 2rem; }
  .city, .tonnes { padding-top: 10.200rem; font-size: 14rem; white-space: nowrap; }
  .drop1 { padding-top: 11.200rem; }
  .drop2 { padding-top: 12.200rem; }
  .drop3 { padding-top: 13.200rem; }
  .inset { padding-left: 1rem; }
  .trend { width: 12rem; height: 12rem; margin-top: 13rem; }

  .map-card { height: 273rem; margin-top: 20rem; }
  .map-title { display: flex; justify-content: space-between; height: 38rem; padding: 11.900rem 24rem 0 20rem; border-bottom: 1rem solid #dfe3ea; }
  .map-title svg { width: 12rem; height: 12rem; margin-top: 2.600rem; }
  .map { width: 430rem; height: 196rem; }
  .land { filter: drop-shadow(0 4px 5px rgba(0, 0, 0, .03)); }
  .legend {
    display: grid; grid-template-columns: 31rem 39rem 38rem 33rem 40rem;
    height: 39rem; padding: 14.300rem 0 0 20rem; border-top: 1rem solid #dfe3ea;
    list-style: none; font-size: 8rem; line-height: 12rem;
  }
  .legend li { display: flex; align-items: flex-start; gap: 5rem; white-space: nowrap; }
  .legend svg { width: 4rem; height: 4rem; margin-top: 4.700rem; }

  nav {
    margin-top: auto; flex: none; height: 64rem; display: grid;
    grid-template-columns: 87rem 120rem 98rem 1fr; background: #0e7c54;
  }
  nav a {
    display: flex; flex-direction: column; align-items: center; justify-content: space-between;
    height: 49.600rem; color: #0d0e0a; text-decoration: none;
    font-size: 10rem; font-weight: 400; line-height: 12rem;
  }
  .home { padding-top: 17rem; }
  .home svg { width: 20rem; height: 17rem; }
  .camera { padding-top: 12rem; height: 47.600rem; }
  .camera svg { width: 24rem; height: 22.200rem; }
  .analytics { padding-top: 15rem; height: 47.600rem; }
  .analytics svg { width: 20rem; height: 18rem; }
  .info { padding: 15.500rem 0 0 13rem; color: #e7e8e3; }
  .info svg { width: 21rem; height: 21rem; }
</style>
